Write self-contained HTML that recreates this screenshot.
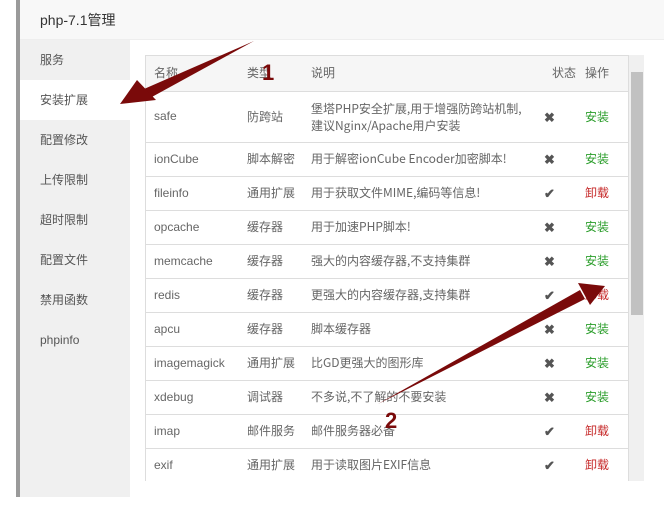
<!DOCTYPE html>
<html><head><meta charset="utf-8">
<style>
*{margin:0;padding:0;box-sizing:border-box}
body{width:664px;height:516px;overflow:hidden;background:#fff;position:relative;font-family:"Liberation Sans","Noto Sans CJK SC",sans-serif;font-size:12px;color:#666}
.strip{position:absolute;left:16px;top:0;width:4px;height:497px;background:#9a9a9a}
.title{position:absolute;left:20px;top:0;width:644px;height:40px;background:#f8f8f8;border-bottom:1px solid #eee;font-size:14px;color:#333;line-height:40px;padding-left:20px}
.side{position:absolute;left:20px;top:40px;width:110px;height:457px;background:#f0f0f0}
.side div{height:40px;line-height:40px;padding-left:20px;color:#555;font-size:12px}
.side .act{background:#fff}
.tbl{position:absolute;left:145px;top:55px;width:484px;border:1px solid #ddd;border-bottom:none;height:426px;overflow:hidden}
table{border-collapse:collapse;width:100%;table-layout:fixed}
td,th{border-top:1px solid #ddd;font-weight:normal;text-align:left;padding:0 0 0 8px;height:34px;line-height:18px;vertical-align:middle;font-size:12px;color:#666;font-family:"Noto Sans CJK SC",sans-serif;white-space:nowrap}
td:first-child{font-family:"Liberation Sans","Noto Sans CJK SC",sans-serif}
th{background:#f6f6f6;border-top:none;height:35px}
tr.big td{height:51px;line-height:17px}
.x{font-size:13px;color:#555;font-weight:bold;padding-left:0}
.g{color:#2a9d2a}.r{color:#c62828}
.sb{position:absolute;left:629px;top:55px;width:15px;height:426px;background:#f0f0f0}
.th{position:absolute;left:631px;top:72px;width:12px;height:243px;background:#c1c1c1}
</style></head><body>
<div class="strip"></div>
<div class="title">php-7.1管理</div>
<div class="side">
<div>服务</div><div class="act">安装扩展</div><div>配置修改</div><div>上传限制</div><div>超时限制</div><div>配置文件</div><div>禁用函数</div><div>phpinfo</div>
</div>
<div class="tbl"><table>
<colgroup><col style="width:93px"><col style="width:64px"><col style="width:241px"><col style="width:33px"><col></colgroup>
<tr><th>名称</th><th>类型</th><th>说明</th><th>状态</th><th>操作</th></tr>
<tr class="big"><td>safe</td><td>防跨站</td><td>堡塔PHP安全扩展,用于增强防跨站机制,<br>建议Nginx/Apache用户安装</td><td class="x">✖</td><td class="g">安装</td></tr>
<tr><td>ionCube</td><td>脚本解密</td><td>用于解密ionCube Encoder加密脚本!</td><td class="x">✖</td><td class="g">安装</td></tr>
<tr><td>fileinfo</td><td>通用扩展</td><td>用于获取文件MIME,编码等信息!</td><td class="x">✔</td><td class="r">卸载</td></tr>
<tr><td>opcache</td><td>缓存器</td><td>用于加速PHP脚本!</td><td class="x">✖</td><td class="g">安装</td></tr>
<tr><td>memcache</td><td>缓存器</td><td>强大的内容缓存器,不支持集群</td><td class="x">✖</td><td class="g">安装</td></tr>
<tr><td>redis</td><td>缓存器</td><td>更强大的内容缓存器,支持集群</td><td class="x">✔</td><td class="r">卸载</td></tr>
<tr><td>apcu</td><td>缓存器</td><td>脚本缓存器</td><td class="x">✖</td><td class="g">安装</td></tr>
<tr><td>imagemagick</td><td>通用扩展</td><td>比GD更强大的图形库</td><td class="x">✖</td><td class="g">安装</td></tr>
<tr><td>xdebug</td><td>调试器</td><td>不多说,不了解的不要安装</td><td class="x">✖</td><td class="g">安装</td></tr>
<tr><td>imap</td><td>邮件服务</td><td>邮件服务器必备</td><td class="x">✔</td><td class="r">卸载</td></tr>
<tr><td>exif</td><td>通用扩展</td><td>用于读取图片EXIF信息</td><td class="x">✔</td><td class="r">卸载</td></tr>
</table></div>
<div class="sb"></div><div class="th"></div>
<svg style="position:absolute;left:0;top:0" width="664" height="516">
<polygon points="254,41 144,89 150,98" fill="#7a0a0a"/>
<polygon points="120,104 137,80 156,100" fill="#7a0a0a"/>
<polygon points="378,404 585,299 580,290" fill="#7a0a0a"/>
<polygon points="605,286 578,283 590,305" fill="#7a0a0a"/>
<text x="262" y="80" font-family="Liberation Sans" font-weight="bold" font-size="22" fill="#7a0a0a">1</text>
<text x="385" y="428" font-family="Liberation Sans" font-weight="bold" font-size="22" fill="#7a0a0a">2</text>
</svg>
</body></html>
